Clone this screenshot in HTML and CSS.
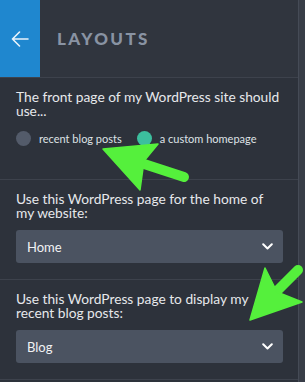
FILE: index.html
```html
<!DOCTYPE html>
<html>
<head>
<meta charset="utf-8">
<link rel="stylesheet" href="styles.css">
</head>
<body>
<div class="screen">
  <div class="panel">
    <div class="header">
      <div class="back">
        <svg width="18" height="16" viewBox="0 0 18 16"><path d="M17 8H1.5M8.5 1L1.5 8l7 7" fill="none" stroke="#eaf3fb" stroke-width="1.6" stroke-linecap="round" stroke-linejoin="round"/></svg>
      </div>
      <div class="title">LAYOUTS</div>
    </div>
    <div class="section s1">
      <p class="label">The front page of my WordPress site should use...</p>
      <div class="radios">
        <label class="radio"><span class="dot"></span>recent blog posts</label>
        <label class="radio"><span class="dot on"></span>a custom homepage</label>
      </div>
    </div>
    <div class="section">
      <p class="label">Use this WordPress page for the home of my website:</p>
      <div class="select"><span>Home</span><svg width="11" height="7" viewBox="0 0 11 7"><path d="M1.2 1.2l4.3 4.3 4.3-4.3" fill="none" stroke="#fff" stroke-width="2" stroke-linecap="round" stroke-linejoin="round"/></svg></div>
    </div>
    <div class="section">
      <p class="label">Use this WordPress page to display my recent blog posts:</p>
      <div class="select"><span>Blog</span><svg width="11" height="7" viewBox="0 0 11 7"><path d="M1.2 1.2l4.3 4.3 4.3-4.3" fill="none" stroke="#fff" stroke-width="2" stroke-linecap="round" stroke-linejoin="round"/></svg></div>
    </div>
  </div>
  <div class="edge"></div>
  <svg class="arrows" width="305" height="382" viewBox="0 0 305 382">
    <g fill="#55f03c" stroke="#55f03c" stroke-linejoin="round">
      <path d="M138 162L184 177" stroke-width="10" stroke-linecap="round" fill="none"/>
      <polygon points="103,149 158,144 144,161 140,190" stroke-width="1.5"/>
      <path d="M273 295L298 270" stroke-width="10" stroke-linecap="round" fill="none"/>
      <polygon points="250,320 265,268 277,292 302,302" stroke-width="1.5"/>
    </g>
  </svg>
</div>
</body>
</html>
```
FILE: styles.css
```css
* { box-sizing: border-box; }
html, body { margin: 0; padding: 0; }
body {
  background: #2d323b;
  font-family: Lato, "Open Sans", sans-serif;
  color: #e4e7ea;
  width: 305px;
  height: 382px;
  overflow: hidden;
}
.screen {
  position: relative;
  display: flex;
  width: 305px;
  height: 382px;
}
.panel {
  width: 299px;
  border-right: 1px solid #454b56;
  background: #2d323b;
}
.edge {
  flex: 1;
  background: #383d47;
}
.header {
  display: flex;
  height: 78px;
  background: #30353e;
  border-bottom: 1px solid #3d424c;
}
.back {
  width: 40px;
  height: 77px;
  background: #1f87cf;
  display: flex;
  align-items: center;
  justify-content: center;
}
.title {
  display: flex;
  align-items: center;
  padding-left: 17px;
  padding-bottom: 1px;
  font-size: 17px;
  font-weight: 900;
  letter-spacing: 2.4px;
  color: #8993a3;
}
.section {
  padding: 12px 16px 16px;
  border-bottom: 1px solid #3d424c;
}
.s1 {
  padding-bottom: 33px;
}
.label {
  margin: 0;
  font-size: 13.75px;
  line-height: 14px;
  color: #e6e8eb;
}
.radios {
  display: flex;
  gap: 15px;
  margin-top: 13px;
}
.radio {
  display: flex;
  align-items: center;
  gap: 8px;
  font-size: 11px;
  line-height: 14px;
  color: #dfe2e6;
}
.dot {
  width: 15px;
  height: 15px;
  border-radius: 50%;
  background: #535b6a;
}
.dot.on {
  background: #3cbf9e;
}
.select {
  margin-top: 10px;
  height: 33px;
  width: 267px;
  border-radius: 3px;
  background: #4b5361;
  display: flex;
  align-items: center;
  justify-content: space-between;
  padding: 0 10px 0 11px;
  font-size: 13px;
  color: #f1f2f4;
}
.arrows {
  position: absolute;
  left: 0;
  top: 0;
  pointer-events: none;
}
```
